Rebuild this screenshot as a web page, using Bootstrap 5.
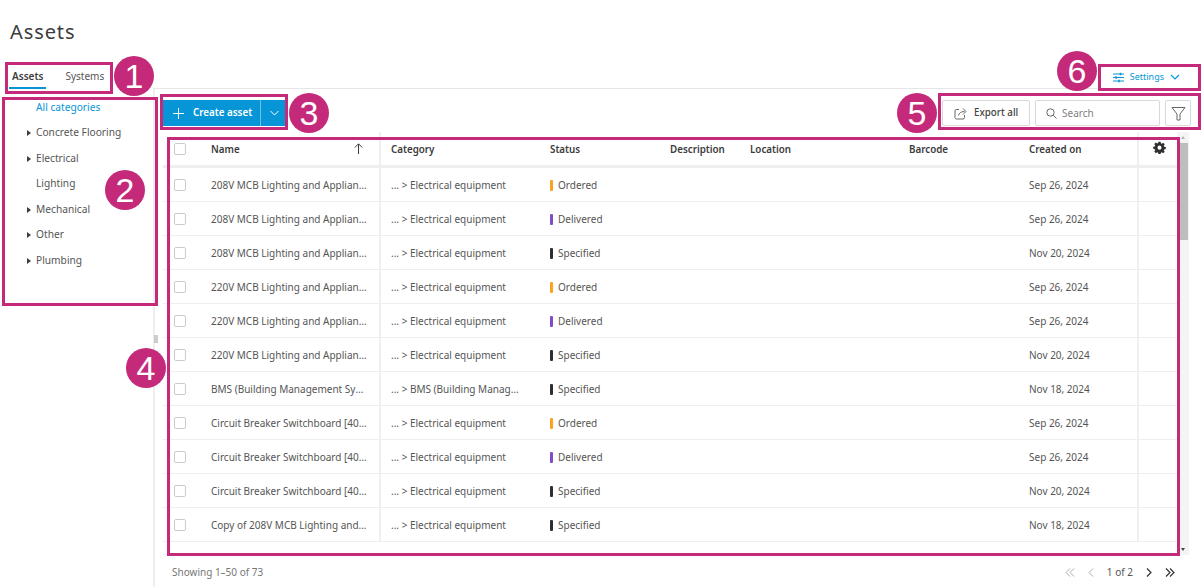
<!DOCTYPE html>
<html lang="en">
<head>
<meta charset="UTF-8">
<title>Assets</title>
<link href="https://cdn.jsdelivr.net/npm/bootstrap@5.3.3/dist/css/bootstrap.min.css" rel="stylesheet">
<style>
	body { font-family: "Noto Sans", "Liberation Sans", sans-serif; font-size: 10px; color: #3c3c3c; background: #fff; overflow: hidden; }
	.page-wrap { width: 1201px; height: 587px; position: relative; overflow: hidden; }
	.page-title { font-size: 20px; font-weight: 400; letter-spacing: .9px; margin: 0; padding: 18px 0 0 10px; height: 64px; line-height: 28px; color: #3c3c3c; }
	.tab-row { height: 24px; padding-left: 12px; padding-right: 21px; }
	.tab-list { gap: 22px; }
	.tab-item { font-size: 10px; line-height: 24px; color: #555; position: relative; }
	.tab-item.on { font-weight: 600; color: #3c3c3c; }
	.tab-item.on::after { content: ""; position: absolute; left: -3px; right: -3px; bottom: -1px; height: 2px; background: #0696d7; }
	.settings-link { color: #0696d7; font-size: 9px; gap: 6px; margin-top: 2px; }
	.body-row { height: 499px; }
	.side-pane { width: 155px; border-right: 2px solid #eee; position: relative; padding-top: 6.5px; }
	.side-handle { position: absolute; right: -5px; top: 247px; width: 4px; height: 8px; background: #ccc; }
	.tree-item { height: 25.6px; line-height: 25.6px; padding-left: 36px; position: relative; color: #555; font-size: 10.2px; }
	.tree-item.on { color: #0696d7; }
	.tree-item.kids::before { content: ""; position: absolute; left: 27px; top: 10px; border-left: 4px solid #3c3c3c; border-top: 3px solid transparent; border-bottom: 3px solid transparent; }
	.main-pane { border-top: 1px solid #e6e6e6; min-width: 0; }
	.tool-row { height: 43px; padding: 11px 10px 0 8px; }
	.create-btn { background: #0696d7; color: #fff; height: 26px; font-size: 9.8px; font-weight: 600; display: flex; align-items: center; }
	.create-main { width: 98px; padding-left: 10px; gap: 9px; display: flex; align-items: center; border-right: 1px solid #6cc0e7; height: 100%; }
	.create-caret { width: 26px; display: flex; align-items: center; justify-content: center; }
	.tool-box { border: 1px solid #d9d9d9; border-radius: 2px; height: 26px; display: flex; align-items: center; background: #fff; }
	.tool-export { width: 88px; padding-left: 11px; gap: 7px; font-weight: 500; font-size: 9.8px; color: #444; }
	.tool-search { width: 125px; padding-left: 10px; gap: 5px; color: #808080; font-size: 10px; margin-left: 5px; }
	.tool-filter { width: 26px; justify-content: center; margin-left: 5px; }
	.grid-wrap { height: 423px; padding-left: 8px; padding-right: 11px; }
	.grid-scroll { width: 1014px; height: 423px; overflow: hidden; border-bottom: 1px solid #eee; }
	.asset-table { table-layout: fixed; width: 1014px; margin: 0; border-collapse: separate; border-spacing: 0; }
	.asset-table th, .asset-table td { height: 34px; padding: 2px 0 0 12px; border-bottom: 1px solid #eee; vertical-align: middle; white-space: nowrap; overflow: hidden; text-overflow: ellipsis; font-size: 10px; color: #555; }
	.asset-table th { height: 36px; padding-top: 4px; border-bottom-width: 3px; font-size: 9.8px; font-weight: 600; color: #3c3c3c; position: relative; }
	.asset-table .c-check { padding: 0 0 0 11px; }
	.asset-table .sep { border-left: 2px solid #f0f0f0; padding-left: 10px; }
	.asset-table .c-name { color: #555; padding-right: 11px; }
	.asset-table .c-cat { padding-right: 14px; }
	.asset-table .c-gear { padding: 0 0 3px 14px; }
	.w-check { width: 36px; }
	.w-name { width: 180px; }
	.w-cat { width: 159px; }
	.w-status { width: 120px; }
	.w-desc { width: 80px; }
	.w-end { width: 40px; }
	.check-box { display: block; width: 12px; height: 12px; border: 1px solid #ccc; border-radius: 2px; }
	.sort-arrow { position: absolute; right: 16px; top: 11px; }
	.status-bar { display: inline-block; width: 3px; height: 11px; border-radius: 1px; margin-right: 5px; vertical-align: -2px; }
	.st-ordered { background: #faa21b; }
	.st-delivered { background: #7f4dc8; }
	.st-specified { background: #2f2f2f; }
	.scroll-track { width: 12px; height: 423px; background: #f4f4f4; position: relative; }
	.scroll-thumb { position: absolute; top: 11px; left: 1px; width: 10px; height: 97px; background: #bdbdbd; }
	.scroll-up, .scroll-down { position: absolute; left: 4px; border-left: 2.5px solid transparent; border-right: 2.5px solid transparent; }
	.scroll-up { top: 4px; border-bottom: 3px solid #b5b5b5; }
	.scroll-down { bottom: 4px; border-top: 3px solid #444; }
	.foot-row { height: 32px; padding: 2px 26px 0 17px; color: #777; font-size: 10px; }
	.pager-text { color: #555; font-size: 10px; gap: 13px; }
	.note-box { position: absolute; border: 3px solid #c5297a; pointer-events: none; }
	.note-1 { left: 5px; top: 62px; width: 108px; height: 32px; }
	.note-2 { left: 2px; top: 97px; width: 156px; height: 209px; }
	.note-3 { left: 160px; top: 94px; width: 128px; height: 36px; }
	.note-4 { left: 167px; top: 137px; width: 1013px; height: 419px; }
	.note-5 { left: 938px; top: 93px; width: 263px; height: 37px; }
	.note-6 { left: 1098px; top: 64px; width: 103px; height: 27px; }
	.note-dot { position: absolute; width: 40px; height: 40px; border-radius: 50%; background: #c5297a; color: #fff; font-family: "Liberation Sans", Arial, sans-serif; font-size: 34px; line-height: 40px; text-align: center; }
	.dot-1 { left: 114px; top: 56px; }
	.dot-2 { left: 105px; top: 170px; }
	.dot-3 { left: 289px; top: 93px; }
	.dot-4 { left: 126px; top: 348px; }
	.dot-5 { left: 897px; top: 93px; }
	.dot-6 { left: 1057px; top: 51px; }
</style>
</head>
<body>
<div class="page-wrap">
	<h1 class="page-title">Assets</h1>

	<div class="tab-row d-flex align-items-center">
		<div class="d-flex tab-list">
			<span class="tab-item on">Assets</span>
			<span class="tab-item">Systems</span>
		</div>
		<div class="settings-link ms-auto d-flex align-items-center">
			<svg width="11" height="11" viewBox="0 0 11 11" fill="none" stroke="#0696d7" stroke-width="1"><path d="M0 2h11M0 5.5h11M0 9h11"/><path d="M7.5 .8v2.4M3 4.3v2.4M6 7.8v2.4" stroke-width="1.6"/></svg>
			<span>Settings</span>
			<svg width="10" height="6" viewBox="0 0 10 6" fill="none" stroke="#0696d7" stroke-width="1.2"><path d="M1 1l4 4 4-4"/></svg>
		</div>
	</div>

	<div class="body-row d-flex">
		<div class="side-pane flex-shrink-0">
			<div class="tree-item on">All categories</div>
			<div class="tree-item kids">Concrete Flooring</div>
			<div class="tree-item kids">Electrical</div>
			<div class="tree-item">Lighting</div>
			<div class="tree-item kids">Mechanical</div>
			<div class="tree-item kids">Other</div>
			<div class="tree-item kids">Plumbing</div>
			<span class="side-handle"></span>
		</div>

		<div class="main-pane flex-grow-1">
			<div class="tool-row d-flex">
				<div class="create-btn">
					<div class="create-main">
						<svg width="11" height="11" viewBox="0 0 11 11" stroke="#fff" stroke-width="1"><path d="M5.5 0v11M0 5.5h11"/></svg>
						<span>Create asset</span>
					</div>
					<div class="create-caret">
						<svg width="9" height="6" viewBox="0 0 9 6" fill="none" stroke="#fff" stroke-width="1"><path d="M.5 1l4 4 4-4"/></svg>
					</div>
				</div>
				<div class="tool-box tool-export ms-auto">
					<svg width="13" height="13" viewBox="0 0 13 13" fill="none" stroke="#666" stroke-width="1"><path d="M5 2.5H2.500a1.500 1.500 0 0 0-1.500 1.500v6.500A1.500 1.500 0 0 0 2.500 12h6.500a1.500 1.500 0 0 0 1.500-1.500V8"/><path d="M4.500 8.500c.5-2.500 2.500-4 6-4M9 1.500l3 3-3 3"/></svg>
					<span>Export all</span>
				</div>
				<div class="tool-box tool-search">
					<svg width="11" height="11" viewBox="0 0 11 11" fill="none" stroke="#666" stroke-width="1"><circle cx="4.500" cy="4.500" r="3.700"/><path d="M7.200 7.200l3.300 3.300"/></svg>
					<span>Search</span>
				</div>
				<div class="tool-box tool-filter">
					<svg width="15" height="15" viewBox="0 0 15 15" fill="none" stroke="#666" stroke-width="1"><path d="M1 1.500h13L9 8v6H6V8z"/></svg>
				</div>
			</div>

			<div class="grid-wrap d-flex">
				<div class="grid-scroll">
					<table class="asset-table">
						<colgroup><col class="w-check"><col class="w-name"><col class="w-cat"><col class="w-status"><col class="w-desc"><col class="w-cat"><col class="w-status"><col class="w-status"><col class="w-end"></colgroup>
						<thead>
							<tr>
								<th class="c-check"><span class="check-box"></span></th>
								<th>Name
									<svg class="sort-arrow" width="9" height="11" viewBox="0 0 9 11" fill="none" stroke="#3c3c3c" stroke-width="1"><path d="M4.500 11V1M.8 4.500l3.700-3.700 3.700 3.700"/></svg>
								</th>
								<th class="sep">Category</th>
								<th>Status</th>
								<th>Description</th>
								<th>Location</th>
								<th>Barcode</th>
								<th>Created on</th>
								<th class="sep c-gear">
									<svg width="13" height="13" viewBox="-1 -1 18 18" fill="#2f2f2f"><path fill-rule="evenodd" d="M6.500 0h3l.4 2.200 1.300.6 1.900-1.300 2.100 2.100-1.300 1.900.6 1.300 2.200.4v3l-2.200.4-.6 1.300 1.300 1.900-2.100 2.100-1.900-1.300-1.300.6-.4 2.200h-3l-.4-2.200-1.300-.6-1.900 1.300L.800 13.500l1.300-1.900-.6-1.300L-.700 9.900v-3l2.200-.4.6-1.300L.800 3.300l2.100-2.100 1.900 1.300 1.300-.6zM8 5.400a2.800 2.800 0 1 0 0 5.600 2.800 2.800 0 0 0 0-5.600z"/></svg>
								</th>
							</tr>
						</thead>
						<tbody id="assetRows"></tbody>
					</table>
				</div>
				<div class="scroll-track">
					<span class="scroll-up"></span>
					<span class="scroll-thumb"></span>
					<span class="scroll-down"></span>
				</div>
			</div>

			<div class="foot-row d-flex align-items-center">
				<span>Showing 1–50 of 73</span>
				<div class="ms-auto d-flex align-items-center pager-text">
					<svg width="10" height="9" viewBox="0 0 10 9" fill="none" stroke="#aaa"><path d="M5 .5l-4 4 4 4M9 .5l-4 4 4 4"/></svg>
					<svg width="6" height="9" viewBox="0 0 6 9" fill="none" stroke="#aaa"><path d="M5 .5l-4 4 4 4"/></svg>
					<span>1 of 2</span>
					<svg width="6" height="9" viewBox="0 0 6 9" fill="none" stroke="#333" stroke-width="1.2"><path d="M1 .5l4 4-4 4"/></svg>
					<svg width="10" height="9" viewBox="0 0 10 9" fill="none" stroke="#333" stroke-width="1.2"><path d="M1 .5l4 4-4 4M5 .5l4 4-4 4"/></svg>
				</div>
			</div>
		</div>
	</div>

	<!-- numbered callouts drawn over the screenshot -->
	<div class="note-box note-1"></div>
	<div class="note-box note-2"></div>
	<div class="note-box note-3"></div>
	<div class="note-box note-4"></div>
	<div class="note-box note-5"></div>
	<div class="note-box note-6"></div>
	<div class="note-dot dot-1">1</div>
	<div class="note-dot dot-2">2</div>
	<div class="note-dot dot-3">3</div>
	<div class="note-dot dot-4">4</div>
	<div class="note-dot dot-5">5</div>
	<div class="note-dot dot-6">6</div>
</div>

<script>
	const assetRows = [
		["208V MCB Lighting and Appliance Panel", "Electrical equipment", "Ordered", "Sep 26, 2024"],
		["208V MCB Lighting and Appliance Panel", "Electrical equipment", "Delivered", "Sep 26, 2024"],
		["208V MCB Lighting and Appliance Panel", "Electrical equipment", "Specified", "Nov 20, 2024"],
		["220V MCB Lighting and Appliance Panel", "Electrical equipment", "Ordered", "Sep 26, 2024"],
		["220V MCB Lighting and Appliance Panel", "Electrical equipment", "Delivered", "Sep 26, 2024"],
		["220V MCB Lighting and Appliance Panel", "Electrical equipment", "Specified", "Nov 20, 2024"],
		["BMS (Building Management System)", "BMS (Building Management System)", "Specified", "Nov 18, 2024"],
		["Circuit Breaker Switchboard [400A]", "Electrical equipment", "Ordered", "Sep 26, 2024"],
		["Circuit Breaker Switchboard [400A]", "Electrical equipment", "Delivered", "Sep 26, 2024"],
		["Circuit Breaker Switchboard [400A]", "Electrical equipment", "Specified", "Nov 20, 2024"],
		["Copy of 208V MCB Lighting and Appliance Panel", "Electrical equipment", "Specified", "Nov 18, 2024"]
	];

	const tbody = document.getElementById("assetRows");
	assetRows.forEach(function (r) {
		const tr = document.createElement("tr");
		tr.innerHTML = '<td class="c-check"><span class="check-box"></span></td>'
			+ '<td class="c-name">' + r[0] + '</td>'
			+ '<td class="sep c-cat">... &gt; ' + r[1] + '</td>'
			+ '<td><span class="status-bar st-' + r[2].toLowerCase() + '"></span>' + r[2] + '</td>'
			+ '<td></td><td></td><td></td>'
			+ '<td>' + r[3] + '</td>'
			+ '<td class="sep"></td>';
		tbody.appendChild(tr);
	});
</script>
<script src="https://cdn.jsdelivr.net/npm/bootstrap@5.3.3/dist/js/bootstrap.bundle.min.js"></script>
</body>
</html>
